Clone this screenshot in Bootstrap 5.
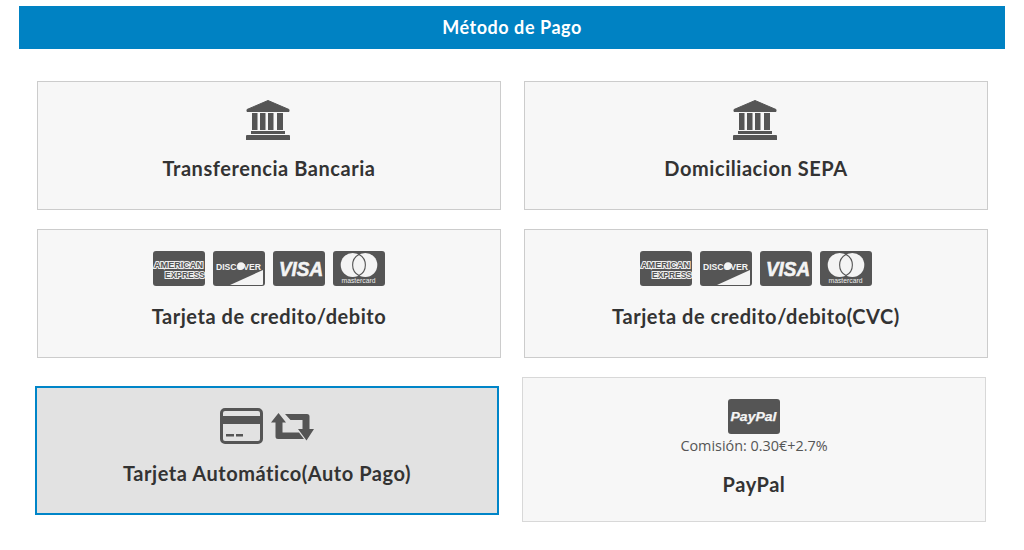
<!DOCTYPE html>
<html lang="es">
<head>
    <meta charset="UTF-8">
    <meta name="viewport" content="width=device-width, initial-scale=1.0">
    <title>Método de Pago</title>
    <link href="https://cdn.jsdelivr.net/npm/bootstrap@5.3.3/dist/css/bootstrap.min.css" rel="stylesheet">
    <style>
        body {
            font-family: "Open Sans", "Noto Sans", sans-serif;
            color: #555;
            background: #fff;
        }
        .pay-page {
            padding: 6px 19px 0;
        }
        .pay-title {
            height: 43px;
            background: #0082c3;
            color: #fff;
            font-family: Lato, sans-serif;
            font-weight: 700;
            font-size: 18px;
            letter-spacing: .55px;
            margin-bottom: 32px;
        }
        .pay-grid {
            display: grid;
            grid-template-columns: 464px 464px;
            column-gap: 23px;
            margin-left: 18px;
            margin-bottom: 19px;
        }
        .pay-grid-last {
            margin-left: 16px;
            margin-bottom: 0;
            margin-top: 19px;
        }
        .pay-box {
            height: 129px;
            background: #f7f7f7;
            border: 1px solid #ccc;
            text-align: center;
        }
        .pay-box-active {
            height: 129px;
            margin-top: 9px;
            background: #e2e2e2;
            border: 2px solid #0085c8;
        }
        .pay-box-tall {
            height: 145px;
            background: #f7f7f7;
            border-color: #d8d8d8;
        }
        .pay-name {
            font-family: Lato, sans-serif;
            font-weight: 700;
            font-size: 20px;
            line-height: 24px;
            color: #333;
            letter-spacing: .55px;
        }
        .pay-fee {
            font-size: 14.4px;
            line-height: 20px;
            color: #555;
        }
        .pay-icons {
            height: 35px;
            margin-top: 21px;
        }
        .ico-bank {
            margin-top: 18px;
            margin-right: 2px;
        }
        .name-bank {
            margin-top: 16px;
        }
        .name-cards {
            margin-top: 18px;
        }
        .auto-icons {
            margin-top: 20px;
            height: 36px;
        }
        .ico-retweet {
            margin-top: 2px;
        }
        .name-auto {
            margin-top: 17px;
        }
        .ico-paypal {
            margin-top: 21px;
        }
        .fee-gap {
            margin-top: 2px;
        }
    </style>
</head>
<body>
    <svg width="0" height="0" class="position-absolute">
        <defs>
            <symbol id="ico-bank" viewBox="0 0 44 40">
                <path fill="#555" stroke="#555" stroke-width="1" stroke-linejoin="round" d="M22 .5 43 9.500v2H1v-2z"/>
                <path fill="#555" d="M6 13h5.500v17H6zM14 13h5.500v17H14zM22 13h5.500v17H22zM31 13h6v17h-6zM5 31h34v3H5zM0 36a1 1 0 0 1 1-1h42a1 1 0 0 1 1 1v4H0z"/>
            </symbol>
            <symbol id="ico-amex" viewBox="0 0 52 35">
                <rect width="52" height="35" rx="3" fill="#555"/>
                <text x="25.500" y="17" text-anchor="middle" font-family="Liberation Sans" font-weight="700" font-size="9.500" textLength="49" lengthAdjust="spacingAndGlyphs" fill="#555" stroke="#eee" stroke-width="2.200" paint-order="stroke">AMERICAN</text>
                <text x="32" y="26.500" text-anchor="middle" font-family="Liberation Sans" font-weight="700" font-size="9.500" textLength="40" lengthAdjust="spacingAndGlyphs" fill="#555" stroke="#eee" stroke-width="2.200" paint-order="stroke">EXPRESS</text>
            </symbol>
            <symbol id="ico-discover" viewBox="0 0 52 35">
                <rect width="52" height="35" rx="3" fill="#555"/>
                <path fill="#f4f4f4" d="M17 34 50 19V33a1 1 0 0 1-1 1z"/>
                <text x="25.500" y="18.500" text-anchor="middle" font-family="Liberation Sans" font-weight="700" font-size="9.500" textLength="45" lengthAdjust="spacingAndGlyphs" fill="#f4f4f4">DISCOVER</text>
                <circle cx="28" cy="15" r="3.700" fill="#f4f4f4"/>
            </symbol>
            <symbol id="ico-visa" viewBox="0 0 52 35">
                <rect width="52" height="35" rx="3" fill="#555"/>
                <text x="28" y="24.500" text-anchor="middle" font-family="Liberation Sans" font-weight="700" font-style="italic" font-size="20" textLength="44" lengthAdjust="spacingAndGlyphs" fill="#f4f4f4" stroke="#f4f4f4" stroke-width=".6">VISA</text>
            </symbol>
            <symbol id="ico-master" viewBox="0 0 52 35">
                <rect width="52" height="35" rx="3" fill="#555"/>
                <circle cx="19.700" cy="14" r="12" fill="#f4f4f4"/>
                <circle cx="32.300" cy="14" r="12" fill="#f4f4f4"/>
                <path fill="none" stroke="#555" stroke-width="1.100" d="M26 3.400a12 12 0 0 1 0 21.200a12 12 0 0 1 0-21.200z"/>
                <text x="25.500" y="32" text-anchor="middle" font-family="Liberation Sans" font-size="6.500" textLength="34" lengthAdjust="spacingAndGlyphs" fill="#eee">mastercard</text>
            </symbol>
        </defs>
    </svg>

    <div class="pay-page">
        <div class="pay-title d-flex align-items-center justify-content-center">Método de Pago</div>

        <div class="pay-grid">
            <div class="pay-box d-flex flex-column align-items-center">
                <svg class="ico-bank" width="44" height="40"><use href="#ico-bank"/></svg>
                <div class="pay-name name-bank">Transferencia Bancaria</div>
            </div>
            <div class="pay-box d-flex flex-column align-items-center">
                <svg class="ico-bank" width="44" height="40"><use href="#ico-bank"/></svg>
                <div class="pay-name name-bank">Domiciliacion SEPA</div>
            </div>
        </div>

        <div class="pay-grid mb-0">
            <div class="pay-box d-flex flex-column align-items-center">
                <div class="pay-icons d-flex gap-2">
                    <svg width="52" height="35"><use href="#ico-amex"/></svg>
                    <svg width="52" height="35"><use href="#ico-discover"/></svg>
                    <svg width="52" height="35"><use href="#ico-visa"/></svg>
                    <svg width="52" height="35"><use href="#ico-master"/></svg>
                </div>
                <div class="pay-name name-cards">Tarjeta de credito/debito</div>
            </div>
            <div class="pay-box d-flex flex-column align-items-center">
                <div class="pay-icons d-flex gap-2">
                    <svg width="52" height="35"><use href="#ico-amex"/></svg>
                    <svg width="52" height="35"><use href="#ico-discover"/></svg>
                    <svg width="52" height="35"><use href="#ico-visa"/></svg>
                    <svg width="52" height="35"><use href="#ico-master"/></svg>
                </div>
                <div class="pay-name name-cards">Tarjeta de credito/debito(CVC)</div>
            </div>
        </div>

        <div class="pay-grid pay-grid-last align-items-start">
            <div class="pay-box pay-box-active d-flex flex-column align-items-center">
                <div class="auto-icons d-flex align-items-center gap-2">
                    <svg width="43" height="36" viewBox="0 0 43 36">
                        <rect x="1.500" y="1.500" width="40" height="33" rx="3.500" fill="none" stroke="#555" stroke-width="3"/>
                        <rect x="2" y="8" width="39" height="8" fill="#555"/>
                        <rect x="6" y="26" width="8" height="2.500" fill="#555"/>
                        <rect x="16" y="26" width="7" height="2.500" fill="#555"/>
                    </svg>
                    <svg class="ico-retweet" width="43" height="28" viewBox="0 0 43 28">
                        <path fill="#555" d="M7.500 0 15 9.500h-3.500v10H28l5 6.500H7a2.500 2.500 0 0 1-2.500-2.500V9.500H0zM35.500 27.500 43 16h-4.500V3.500A2.500 2.500 0 0 0 36 1H14l5.500 6h12v9H27z"/>
                    </svg>
                </div>
                <div class="pay-name name-auto">Tarjeta Automático(Auto Pago)</div>
            </div>
            <div class="pay-box pay-box-tall d-flex flex-column align-items-center">
                <svg class="ico-paypal" width="52" height="35" viewBox="0 0 52 35">
                    <rect width="52" height="35" rx="3" fill="#555"/>
                    <text x="25.500" y="22" text-anchor="middle" font-family="Liberation Sans" font-weight="700" font-style="italic" font-size="12.500" textLength="46" lengthAdjust="spacingAndGlyphs" fill="#f4f4f4" stroke="#f4f4f4" stroke-width=".25">PayPal</text>
                </svg>
                <div class="pay-fee fee-gap">Comisión: 0.30€+2.7%</div>
                <div class="pay-name mt-3">PayPal</div>
            </div>
        </div>
    </div>

    <script src="https://cdn.jsdelivr.net/npm/bootstrap@5.3.3/dist/js/bootstrap.bundle.min.js"></script>
</body>
</html>
